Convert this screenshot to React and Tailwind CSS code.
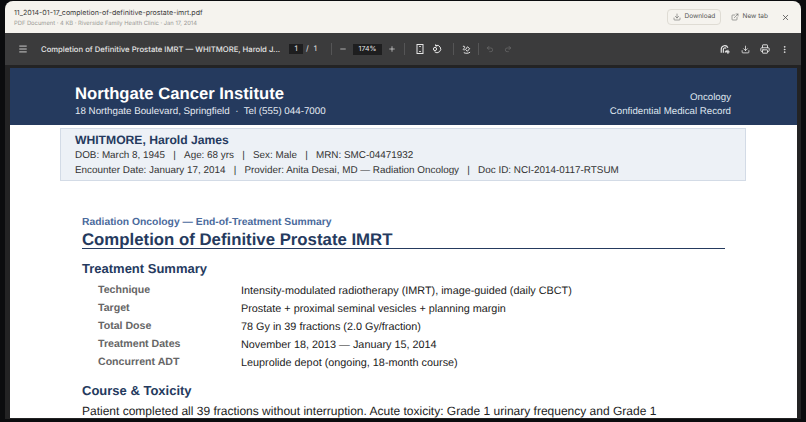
import React from "react";
import { Menu, Minus, Plus, Download, ExternalLink, X, Undo2, Redo2, Printer, MoreVertical } from "lucide-react";

const rows = [
  ["Technique", "Intensity-modulated radiotherapy (IMRT), image-guided (daily CBCT)"],
  ["Target", "Prostate + proximal seminal vesicles + planning margin"],
  ["Total Dose", "78 Gy in 39 fractions (2.0 Gy/fraction)"],
  ["Treatment Dates", "November 18, 2013 — January 15, 2014"],
  ["Concurrent ADT", "Leuprolide depot (ongoing, 18-month course)"],
];

const Sep = ({ className }) => <div className={"w-px h-[12px] bg-[#555556] shrink-0 " + className} />;
const S = () => <span>&nbsp;&nbsp;&nbsp;|&nbsp;&nbsp;&nbsp;</span>;

export default function App() {
  return (
    <div className="w-[806px] h-[422px] bg-[#0b0c0e] overflow-hidden font-['Inter',sans-serif] [text-rendering:geometricPrecision]">
      <div className="ml-[5px] w-[796px] h-[418px] mt-px rounded-t-[8px] overflow-hidden flex flex-col bg-[#2a2a2b]">
        <div className="h-[32px] bg-[#f5f3ee] flex items-center pl-[9px] pr-[11px] shrink-0">
          <div className="flex-1 min-w-0">
            <div className="text-[7.05px] leading-[11px] text-[#3b3b3b]">11_2014-01-17_completion-of-definitive-prostate-imrt.pdf</div>
            <div className="text-[5.8px] leading-[9px] mt-px text-[#9a9a96]">PDF Document · 4 KB · Riverside Family Health Clinic · Jan 17, 2014</div>
          </div>
          <div className="flex items-center h-[16px] w-[54px] pl-[5px] gap-[3px] rounded-[4px] border border-[#dfdcd4] text-[#555] text-[6.5px] whitespace-nowrap">
            <Download size={8} strokeWidth={1.6} /> Download
          </div>
          <div className="flex items-center ml-[10px] gap-[3px] text-[#555] text-[6.5px] whitespace-nowrap">
            <ExternalLink size={8} strokeWidth={1.6} /> New tab
          </div>
          <X size={9} strokeWidth={2} className="ml-[13px] text-[#444]" />
        </div>
        <div className="h-[32px] bg-[#3b3b3c] flex items-center pl-[13px] pr-[12px] text-[#e6e6e6] shrink-0">
          <Menu size={10} strokeWidth={2} className="shrink-0" />
          <div className="ml-[13px] w-[235px] shrink-0 pt-px text-[7.7px] font-medium whitespace-nowrap overflow-visible">Completion of Definitive Prostate IMRT — WHITMORE, Harold J...</div>
          <div className="ml-[13px] w-[14px] h-[10px] shrink-0 bg-[#1e1e1f] flex items-center justify-center text-[7.5px]">1</div>
          <div className="ml-[3px] text-[7.5px] w-[25px] shrink-0 flex gap-[5px] items-center"><span>/</span><span>1</span></div>
          <Sep />
          <Minus size={8} className="ml-[7px] shrink-0" strokeWidth={2} />
          <div className="ml-[6px] w-[29px] h-[11px] shrink-0 bg-[#1e1e1f] flex items-center justify-center text-[7px]">174%</div>
          <Plus size={8} className="ml-[6px] shrink-0" strokeWidth={2} />
          <Sep className="ml-[8px]" />
          <svg viewBox="0 0 8 10" className="w-[8px] h-[10px] ml-[11px] shrink-0" fill="none" stroke="currentColor" strokeWidth="1">
            <rect x="1" y="0.5" width="6" height="9" />
            <path d="M3 3l1-1 1 1M3 7l1 1 1-1" strokeWidth="0.8" />
          </svg>
          <svg viewBox="0 0 10 10" className="w-[10px] h-[10px] ml-[8px] shrink-0" fill="none" stroke="currentColor" strokeWidth="1">
            <path d="M3.6 1.6a3.7 3.7 0 1 1-1 6.2M3.6 0.4v1.6h1.6" />
            <circle cx="3" cy="5" r="1.6" />
          </svg>
          <Sep className="ml-[11px]" />
          <svg viewBox="0 0 10 10" className="w-[9px] h-[9px] ml-[8px] shrink-0" fill="none" stroke="currentColor" strokeWidth="1.1">
            <path d="M1 1.5c2.5-1 2.5 1.5 1 2.5s0 2 1.5 1M2 8.5c2 1 5 1 7-.5M6 2l2.5 2L6 7 4 5z" />
          </svg>
          <Sep className="ml-[7px]" />
          <Undo2 size={8} className="ml-[7px] text-[#7d7d7d] shrink-0" strokeWidth={1.6} />
          <Redo2 size={8} className="ml-[10px] text-[#7d7d7d] shrink-0" strokeWidth={1.6} />
          <div className="flex-1" />
          <svg viewBox="0 0 12 12" className="w-[10px] h-[10px] shrink-0" fill="none" stroke="currentColor" strokeWidth="1.4">
            <path d="M1.5 10.5V6a4.2 4.2 0 0 1 8-1.5M4 10.5V6.5a2 2 0 0 1 3.4-1.3M6 10l2-2.2M9.5 7v4.6M7.5 9.5h4" />
          </svg>
          <Download size={9} className="ml-[11px] shrink-0" strokeWidth={2.2} />
          <Printer size={10} className="ml-[10px] shrink-0" strokeWidth={2.2} />
          <MoreVertical size={9} className="ml-[10px] shrink-0" strokeWidth={2.4} />
        </div>
        <div className="flex-1 min-h-0 bg-[#232324] pl-[5px] pr-[4px] pt-[3px] overflow-hidden font-['Liberation_Sans',sans-serif]">
          <div className="bg-white w-[787px] h-[350px] overflow-hidden">
            <div className="h-[57px] bg-[#253a5e] flex justify-between items-start pl-[65px] pr-[66px] text-white">
              <div>
                <div className="mt-[16px] text-[16.65px] leading-[20px] font-bold">Northgate Cancer Institute</div>
                <div className="mt-px text-[9.78px] leading-[14px] text-[#e4e9f1]">18 Northgate Boulevard, Springfield &nbsp;·&nbsp; Tel (555) 044-7000</div>
              </div>
              <div className="mt-[23px] text-right text-[9.7px] leading-[14px] text-[#dfe5ee]">
                <div>Oncology</div>
                <div>Confidential Medical Record</div>
              </div>
            </div>
            <div className="ml-[50px] mt-[3px] w-[686px] h-[53px] bg-[#edf1f6] border border-[#d3dbe6] pl-[14px] pt-[3px]">
              <div className="text-[12.15px] leading-[16px] font-bold text-[#253a5e]">WHITMORE, Harold James</div>
              <div className="text-[9.9px] leading-[15px] text-[#333]">DOB: March 8, 1945<S />Age: 68 yrs<S />Sex: Male<S />MRN: SMC-04471932</div>
              <div className="text-[9.9px] leading-[15px] text-[#333]">Encounter Date: January 17, 2014<S />Provider: Anita Desai, MD — Radiation Oncology<S />Doc ID: NCI-2014-0117-RTSUM</div>
            </div>
            <div className="ml-[72px] w-[643px] mt-[35px]">
              <div className="text-[10.35px] leading-[14px] font-bold text-[#4a6a9c]">Radiation Oncology — End-of-Treatment Summary</div>
              <div className="pt-[2px] text-[16.8px] leading-[16px] font-bold text-[#253a5e] border-b border-[#253a5e]">Completion of Definitive Prostate IMRT</div>
              <div className="mt-[12px] text-[13px] leading-[16px] font-bold text-[#253a5e]">Treatment Summary</div>
              <div className="mt-[5px]">
                {rows.map(([k, v]) => (
                  <div key={k} className="flex h-[18px] items-center pl-[16px]">
                    <div className="w-[143px] text-[10.6px] font-bold text-[#666]">{k}</div>
                    <div className="text-[10.83px] text-[#222]">{v}</div>
                  </div>
                ))}
              </div>
              <div className="mt-[11px] text-[13px] leading-[16px] font-bold text-[#253a5e]">Course &amp; Toxicity</div>
              <div className="mt-[4px] text-[12px] leading-[16px] text-[#222] whitespace-nowrap">Patient completed all 39 fractions without interruption. Acute toxicity: Grade 1 urinary frequency and Grade 1</div>
            </div>
          </div>
        </div>
      </div>
    </div>
  );
}
